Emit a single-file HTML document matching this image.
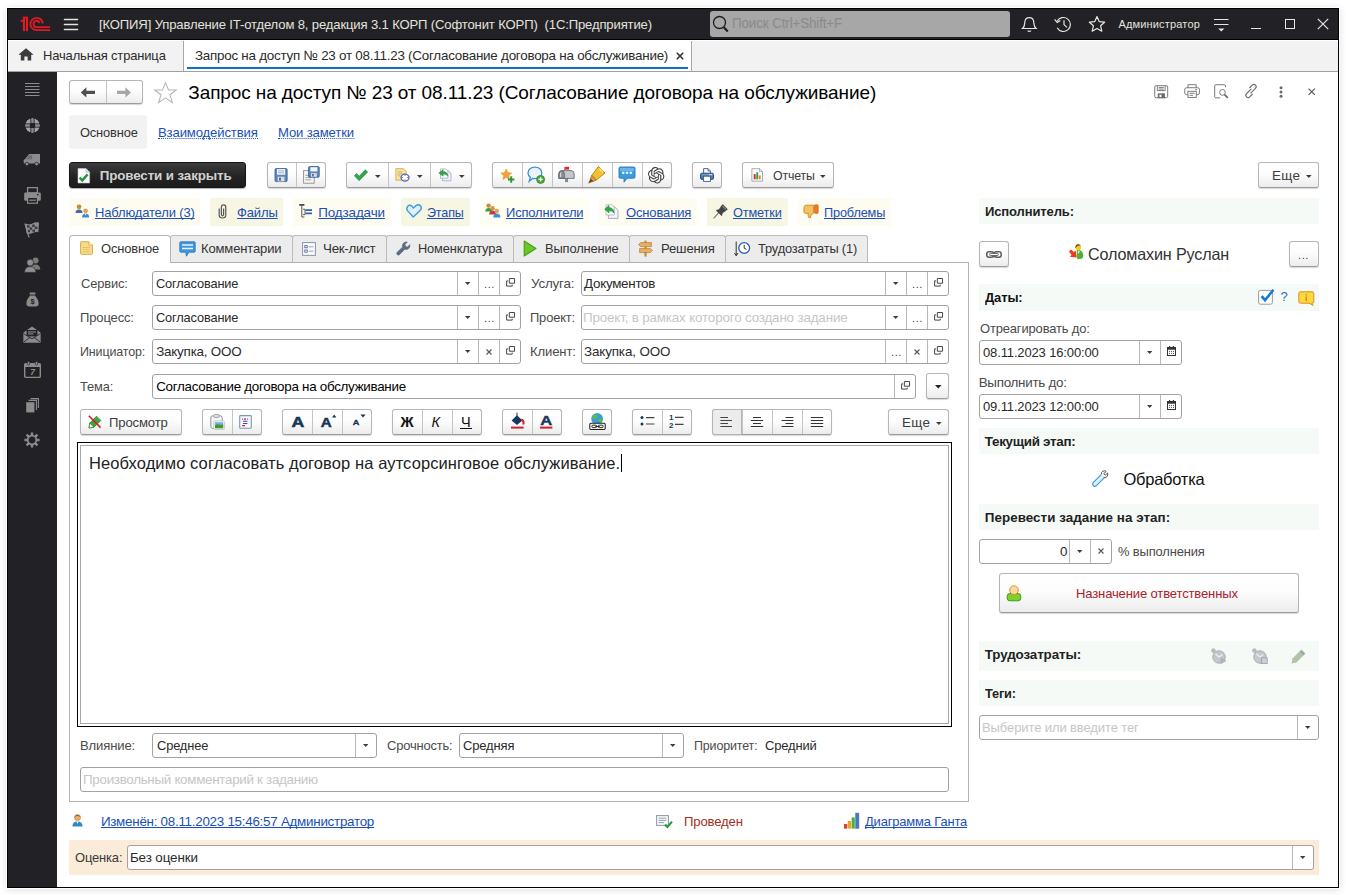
<!DOCTYPE html>
<html><head><meta charset="utf-8">
<style>
*{box-sizing:border-box;margin:0;padding:0}
html,body{width:1346px;height:895px;overflow:hidden;background:#fff}
body{font-family:"Liberation Sans",sans-serif;font-size:13px;color:#333;position:relative}
.a{position:absolute;white-space:pre}
#win{position:absolute;left:7px;top:8px;width:1332px;height:880px;border:1px solid #000;background:#fff;box-shadow:0 0 0 1px #fff,0 1px 7px 1px rgba(0,0,0,.13)}
#tb{position:absolute;left:8px;top:9px;width:1330px;height:31px;background:#222226}
#tabs{position:absolute;left:8px;top:40px;width:1330px;height:32px;background:#f2f2f2;border-bottom:1px solid #a0a0a0}
#side{position:absolute;left:8px;top:72px;width:49px;height:815px;background:#222226}
.btn{position:absolute;border:1px solid #b6b6b6;border-bottom-color:#9c9c9c;border-radius:3px;background:linear-gradient(#ffffff 0%,#fdfdfd 45%,#ececec 100%);box-shadow:0 1px 1px rgba(0,0,0,.16);color:#444}
.dv{position:absolute;top:0;bottom:0;width:1px;background:#c4c4c4}
.inp{position:absolute;border:1px solid #a2a2a2;border-radius:3px;background:#fff;height:25px;color:#222}
.inp .t{position:absolute;left:4px;top:4px;white-space:pre;font-size:13px}
.inp .ph{color:#c3c3c3}
.inp .dv{background:#b8b8b8}
.lbl{position:absolute;white-space:pre;color:#4a4a4a;font-size:13px}
.lnk{color:#1a4fb5;text-decoration:underline;text-decoration-skip-ink:none}
.hdr{position:absolute;left:979px;width:340px;background:#f5faf7;font-weight:bold;color:#222;font-size:13.4px;padding-left:5px;white-space:pre}
.li{position:absolute;top:198px;height:28px}
.li span{position:absolute;top:6px;white-space:pre;font-size:13px}
.tab{position:absolute;top:235px;height:28px;border:1px solid #bcbcbc;border-left:none;background:#ececec;border-bottom:1px solid #b0b0b0;border-radius:3px 3px 0 0}
.tab span{position:absolute;top:5px;white-space:pre;font-size:13.3px;color:#333}
.lk{top:205px;font-size:13.4px;line-height:15px}
.tt{top:241px;font-size:13.4px;line-height:15px;color:#333}
.arr{position:absolute;width:0;height:0;border-left:3px solid transparent;border-right:3px solid transparent;border-top:3px solid #444}
svg{position:absolute;overflow:visible}
</style></head><body>
<div id="win"></div>
<div id="tb"></div>
<div id="tabs"></div>
<div id="side"></div>
<div class="a" style="left:8px;top:39px;width:1330px;height:1px;background:#000"></div><div class="a" style="left:8px;top:40px;width:1330px;height:1px;background:#fff"></div>
<!--TITLEBAR-->
<svg style="left:20px;top:16px" width="31" height="16" viewBox="0 0 31 16"><g fill="#df1a22"><rect x="2.9" y="0.8" width="2.1" height="14.3"></rect><rect x="5.9" y="0.8" width="2.1" height="14.3"></rect><rect x="0.8" y="3.8" width="2.4" height="2.1"></rect><rect x="2.9" y="0.8" width="5.1" height="1.6"></rect></g><g fill="none" stroke="#df1a22" stroke-width="1.8"><path d="M22.8 7.4A6.2 6.2 0 1 0 16.6 14.2H30.1"></path><path d="M19.7 7A3.2 3.2 0 1 0 16.6 11.2H30.1"></path></g></svg>
<svg style="left:63px;top:18px" width="16" height="13" viewBox="0 0 16 13"><g stroke="#e2e2e2" stroke-width="1.4" stroke-linecap="round"><path d="M1.4 1.5H14.6M1.4 6.5H14.6M1.4 11.5H14.6"></path></g></svg>
<div class="a" style="top: 17px; font-size: 13.4px; line-height: 15px; color: rgb(226, 226, 222); transform: scaleX(0.9769); transform-origin: 0px 0px; letter-spacing: -0.15px; left: 99px;">[КОПИЯ] Управление IT-отделом 8, редакция 3.1 КОРП (Софтонит КОРП)  (1С:Предприятие)</div>
<div class="a" style="left:710px;top:11px;width:300px;height:26px;background:#a7a7a7;border-radius:3px"></div>
<svg style="left:712px;top:14px" width="18" height="19" viewBox="0 0 18 19"><circle cx="7.5" cy="8.5" r="6" fill="none" stroke="#1e1e1e" stroke-width="1.3"></circle><path d="M11.8 13.2L15.8 17.4" stroke="#1e1e1e" stroke-width="2.2"></path></svg>
<div class="a" style="top: 15px; font-size: 14px; line-height: 17px; color: rgb(138, 138, 138); transform: scaleX(0.9605); transform-origin: 0px 0px; letter-spacing: -0.15px; left: 731.54px;">Поиск Ctrl+Shift+F</div>
<svg style="left:1021px;top:16px" width="17" height="17" viewBox="0 0 17 17"><g fill="none" stroke="#e6e6e6" stroke-width="1.2"><path d="M1.5 12.5 C3.8 10.5 3.6 8.5 3.8 6.2 C4 3.4 6 1.6 8.3 1.6 C10.6 1.6 12.6 3.4 12.8 6.2 C13 8.5 12.8 10.5 15.1 12.5 Z"></path><path d="M6.6 14.6 Q8.3 16.2 10 14.6"></path></g></svg>
<svg style="left:1054px;top:16px" width="19" height="17" viewBox="0 0 19 17"><g fill="none" stroke="#e6e6e6" stroke-width="1.2"><path d="M3.2 5.2 A7 7 0 1 1 3.2 11.8"></path><path d="M10 4.2V8.6L13 11.4"></path><path d="M0.6 3.4L3.2 6.4L6.4 4.4"></path></g></svg>
<svg style="left:1088px;top:15px" width="18" height="18" viewBox="0 0 18 18"><path d="M9 1.6L11.2 6.6L16.6 7.2L12.6 10.8L13.8 16.2L9 13.4L4.2 16.2L5.4 10.8L1.4 7.2L6.8 6.6Z" fill="none" stroke="#e6e6e6" stroke-width="1.2" stroke-linejoin="round"></path></svg>
<div class="a" style="top: 17px; font-size: 11px; line-height: 15px; color: rgb(226, 226, 222); letter-spacing: 0.171px; left: 1118.4px;">Администратор</div>
<svg style="left:1214px;top:18px" width="15" height="15" viewBox="0 0 15 15"><g stroke="#e6e6e6" stroke-width="1.1"><path d="M0 1.5H14.5M0 6.5H14.5"></path></g><path d="M4.2 10.4H10.4L7.3 13.6Z" fill="#e6e6e6"></path></svg>
<div class="a" style="left:1251px;top:28px;width:10px;height:1.3px;background:#e6e6e6"></div>
<div class="a" style="left:1285px;top:19px;width:10px;height:10px;border:1.2px solid #e6e6e6"></div>
<svg style="left:1317px;top:18px" width="12" height="12" viewBox="0 0 12 12"><path d="M0.8 0.8L11.2 11.2M11.2 0.8L0.8 11.2" stroke="#e6e6e6" stroke-width="1.2"></path></svg>
<!--TABBAR-->
<svg style="left:18px;top:48px" width="16" height="13" viewBox="0 0 16 13"><path d="M8 0.3L15.6 6.8H13.2V12.6H9.6V8.4H6.4V12.6H2.8V6.8H0.4Z" fill="#3c3c3c"></path></svg>
<div class="a" style="top: 48px; font-size: 13.4px; line-height: 15px; color: rgb(43, 43, 43); transform: scaleX(0.9671); transform-origin: 0px 0px; letter-spacing: -0.15px; left: 43.23px;">Начальная страница</div>
<div class="a" style="left:183px;top:41px;width:509px;height:30px;background:#fff;border-left:1px solid #a6a6a6;border-right:1px solid #a6a6a6"></div>
<div class="a" style="top: 48px; font-size: 13.4px; line-height: 15px; color: rgb(43, 43, 43); letter-spacing: -0.232px; left: 194.9px;">Запрос на доступ № 23 от 08.11.23 (Согласование договора на обслуживание)</div>
<div class="a" style="left:187px;top:67px;width:501px;height:2px;background:#0f70c8"></div>
<svg style="left:676px;top:52px" width="8" height="8" viewBox="0 0 8 8"><path d="M0.8 0.8L7.2 7.2M7.2 0.8L0.8 7.2" stroke="#333" stroke-width="1.6"></path></svg>
<!--SIDEBAR-->
<svg style="left:25px;top:82px" width="15" height="15" viewBox="0 0 15 15"><path d="M0 1.5H14.5M0 4.5H14.5M0 7.5H14.5M0 10.5H14.5M0 13.5H14.5" stroke="#8c8c8c" stroke-width="1"></path></svg>
<svg style="left:25px;top:118px" width="15" height="15" viewBox="0 0 15 15"><circle cx="7.5" cy="7.5" r="7.3" fill="#a4a4a4"></circle><rect x="6" y="0" width="3" height="15" fill="#8a8a8a"></rect><rect x="0" y="6" width="15" height="3" fill="#8a8a8a"></rect><path d="M5.8 0V15M9.2 0V15M0 5.8H15M0 9.2H15" stroke="#2a2a2e" stroke-width=".9"></path><circle cx="7.5" cy="7.5" r="7.9" fill="none" stroke="#222226" stroke-width="1"></circle><rect x="4.9" y="4.9" width="5.2" height="5.2" rx="1.6" fill="#222226"></rect></svg>
<svg style="left:23px;top:153px" width="18" height="14" viewBox="0 0 18 14"><path d="M6.2 1H17V10.6H0.8V7.2Z" fill="#8c8c8c"></path><path d="M6.6 2.2H9.2V6.2H2.6Z" fill="#6e6e6e"></path><circle cx="4" cy="11" r="1.8" fill="#8c8c8c" stroke="#222226" stroke-width=".7"></circle><circle cx="13.6" cy="11" r="1.8" fill="#8c8c8c" stroke="#222226" stroke-width=".7"></circle></svg>
<svg style="left:24px;top:187px" width="17" height="17" viewBox="0 0 17 17"><path d="M3.6 0.6H13.4V6H3.6Z" fill="none" stroke="#8c8c8c" stroke-width="1.3"></path><rect x="0.2" y="5.4" width="16.6" height="8.4" rx="1.3" fill="#8c8c8c"></rect><rect x="3.6" y="10.4" width="9.8" height="5.8" fill="#222226" stroke="#8c8c8c" stroke-width="1.2"></rect><rect x="5.2" y="12.6" width="6.6" height="1.2" fill="#8c8c8c"></rect><rect x="13" y="7" width="1.6" height="1.4" fill="#222226"></rect></svg>
<svg style="left:24px;top:222px" width="16" height="16" viewBox="0 0 16 16"><path d="M1 1.6Q5 3.2 8.4 1.4T15 0.6L14.4 10.2Q11 9.8 8 11.2T2.6 11.6Z" fill="#8c8c8c"></path><g fill="#222226" opacity=".75"><rect x="3" y="3.2" width="2.6" height="2.4"></rect><rect x="8.2" y="2.6" width="2.6" height="2.4"></rect><rect x="5.6" y="5.4" width="2.6" height="2.4"></rect><rect x="10.8" y="4.6" width="2.6" height="2.4"></rect><rect x="3.6" y="8" width="2.4" height="2.2"></rect><rect x="8.4" y="7.6" width="2.6" height="2.2"></rect></g><path d="M1 1.6L5 15.4" stroke="#8c8c8c" stroke-width="1.3"></path></svg>
<svg style="left:24px;top:257px" width="17" height="16" viewBox="0 0 17 16"><circle cx="11.6" cy="3.6" r="3" fill="#7a7a7a"></circle><path d="M7 12.4Q7.4 7.4 11.6 7.4T16.4 12.4Z" fill="#7a7a7a"></path><circle cx="6.2" cy="5.6" r="3.4" fill="#8e8e8e" stroke="#222226" stroke-width=".6"></circle><path d="M0.4 15.4Q0.8 9.6 6.2 9.6T12 15.4Z" fill="#8e8e8e" stroke="#222226" stroke-width=".6"></path></svg>
<svg style="left:26px;top:292px" width="13" height="15" viewBox="0 0 13 15"><rect x="3.6" y="0.4" width="5.8" height="2.2" rx=".6" fill="#8c8c8c"></rect><path d="M4 3.4H9Q12.6 7.4 12.6 11.4Q12.6 14.4 9.6 14.4H3.4Q0.4 14.4 0.4 11.4Q0.4 7.4 4 3.4Z" fill="#8c8c8c"></path><text x="6.5" y="12.2" font-size="7.5" font-weight="bold" text-anchor="middle" fill="#222226" font-family="Liberation Sans">$</text></svg>
<svg style="left:23px;top:326px" width="18" height="17" viewBox="0 0 18 17"><path d="M0.6 6.6L9 0.6L17.4 6.6V16.4H0.6Z" fill="#8c8c8c"></path><rect x="3.6" y="4" width="10.8" height="6.4" fill="#222226"></rect><rect x="5" y="5.4" width="8" height="1.1" fill="#8c8c8c"></rect><rect x="5" y="7.4" width="5.4" height="1.1" fill="#8c8c8c"></rect><path d="M0.6 7.4L9 12.6L17.4 7.4V16.4H0.6Z" fill="#8c8c8c"></path><path d="M1 15.8L7 11.4M17 15.8L11 11.4" stroke="#222226" stroke-width=".9"></path><path d="M1.2 8L9 12.8L16.8 8" stroke="#222226" stroke-width=".9" fill="none"></path></svg>
<svg style="left:24px;top:361px" width="17" height="17" viewBox="0 0 17 17"><rect x="0.7" y="2.6" width="15.6" height="13.8" rx="1.2" fill="none" stroke="#8c8c8c" stroke-width="1.4"></rect><rect x="0.7" y="2.6" width="15.6" height="3.4" fill="#8c8c8c"></rect><rect x="3.4" y="0.4" width="2.2" height="3.6" rx=".8" fill="#8c8c8c" stroke="#222226" stroke-width=".6"></rect><rect x="11.4" y="0.4" width="2.2" height="3.6" rx=".8" fill="#8c8c8c" stroke="#222226" stroke-width=".6"></rect><text x="8.7" y="14.4" font-size="8.6" font-weight="bold" font-style="italic" text-anchor="middle" fill="#8c8c8c" font-family="Liberation Sans">7</text></svg>
<svg style="left:26px;top:398px" width="13" height="15" viewBox="0 0 13 15"><path d="M4.6 0.6H12.4V10" fill="none" stroke="#8c8c8c" stroke-width="1.1"></path><path d="M2.6 2.4H10.4V12" fill="none" stroke="#8c8c8c" stroke-width="1.1"></path><rect x="0.2" y="4.2" width="8.2" height="10.2" fill="#8c8c8c"></rect></svg>
<svg style="left:24px;top:432px" width="16" height="16" viewBox="0 0 16 16"><g stroke="#8c8c8c" stroke-width="2.4"><path d="M8 0.4V15.6M0.4 8H15.6M2.6 2.6L13.4 13.4M13.4 2.6L2.6 13.4"></path></g><circle cx="8" cy="8" r="4.3" fill="#222226" stroke="#8c8c8c" stroke-width="1.7"></circle></svg>
<!--HEADER-->
<div class="btn" style="left:69px;top:80px;width:74px;height:24px"><div class="dv" style="left:36px"></div></div>
<svg style="left:80px;top:87px" width="16" height="11" viewBox="0 0 16 11"><path d="M0.8 5.4L6.4 0.2V3.8H15V7H6.4V10.6Z" fill="#505050"></path></svg>
<svg style="left:116px;top:87px" width="16" height="11" viewBox="0 0 16 11"><path d="M15 5.4L9.4 0.2V3.8H1V7H9.4V10.6Z" fill="#a6a6a6"></path></svg>
<svg style="left:153px;top:81px" width="25" height="24" viewBox="0 0 25 24"><path d="M12.5 1.6L15.5 9H23.2L17 13.8L19.4 21.6L12.5 16.8L5.6 21.6L8 13.8L1.8 9H9.5Z" fill="#fff" stroke="#b4b8bc" stroke-width="1.1" stroke-linejoin="miter"></path></svg>
<div class="a" style="top: 82px; font-size: 19px; line-height: 22px; color: rgb(0, 0, 0); letter-spacing: -0.104px; left: 188.3px;">Запрос на доступ № 23 от 08.11.23 (Согласование договора на обслуживание)</div>
<svg style="left:1154.2px;top:85px" width="14.6" height="13.6" viewBox="0 0 16 16" preserveAspectRatio="none"><g fill="none" stroke="#6a6a6a" stroke-width="1"><rect x="0.8" y="0.8" width="14.2" height="14.2" rx="1.6"></rect><path d="M3.6 1V6.6H12.2V1M5.2 3H10.6M5.2 4.8H10.6"></path><rect x="4.6" y="10.4" width="6.8" height="4.6" fill="#6a6a6a"></rect></g><rect x="6" y="11.4" width="2.2" height="2.8" fill="#fff"></rect></svg>
<svg style="left:1184px;top:84.2px" width="16.2" height="14.4" viewBox="0 0 18 17" preserveAspectRatio="none"><g fill="none" stroke="#6a6a6a" stroke-width="1"><path d="M4.4 4.4V0.8H13.6V4.4"></path><rect x="0.8" y="4.4" width="16.4" height="8.2" rx="2"></rect><rect x="4.4" y="8.6" width="9.2" height="7.4" fill="#fff"></rect><path d="M6.2 11H11.8M6.2 13.4H10M12.4 6.6H14.4"></path></g></svg>
<svg style="left:1214.2px;top:84.2px" width="15" height="14.6" viewBox="0 0 17 16" preserveAspectRatio="none"><g fill="none" stroke="#6a6a6a" stroke-width="1"><path d="M13 3.6V2Q13 0.8 11.8 0.8H2Q0.8 0.8 0.8 2V14Q0.8 15.2 2 15.2H7"></path><circle cx="9.6" cy="9.2" r="3.2"></circle><path d="M12 11.6L15.6 15.2" stroke-width="2"></path></g></svg>
<svg style="left:1243.4px;top:83.4px" width="16" height="16" viewBox="0 0 17 17"><g transform="rotate(-45 8.5 8.5)" fill="none" stroke="#6a6a6a" stroke-width="1.2" stroke-linecap="round"><path d="M10 7.1H3.2A2.4 2.4 0 0 0 3.2 11.9H7"></path><path d="M7 9.9H13.8A2.4 2.4 0 0 0 13.8 5.1H10"></path></g></svg>
<svg style="left:1279px;top:86px" width="4" height="12" viewBox="0 0 4 12"><circle cx="2" cy="1.8" r="1.5" fill="#6a6a6a"></circle><circle cx="2" cy="6" r="1.5" fill="#6a6a6a"></circle><circle cx="2" cy="10.2" r="1.5" fill="#6a6a6a"></circle></svg>
<svg style="left:1308px;top:88px" width="7.4" height="7.4" viewBox="0 0 8 8"><path d="M0.6 0.6L7.4 7.4M7.4 0.6L0.6 7.4" stroke="#5a5a5a" stroke-width="1.3"></path></svg>
<div class="a" style="left:69px;top:115px;width:78px;height:34px;background:#f2f2f2;border-radius:3px"></div>
<div class="a" style="top: 125px; font-size: 13.4px; line-height: 15px; color: rgb(51, 51, 51); transform: scaleX(0.9589); transform-origin: 0px 0px; letter-spacing: -0.15px; left: 79.9px;">Основное</div>
<div class="a" style="top: 125px; font-size: 13.4px; color: rgb(26, 79, 181); border-bottom: 1px dotted rgb(26, 79, 181); line-height: 15px; height: 14px; transform: scaleX(0.9804); transform-origin: 0px 0px; letter-spacing: -0.15px; left: 157.72px;">Взаимодействия</div>
<div class="a" style="top: 125px; font-size: 13.4px; color: rgb(26, 79, 181); border-bottom: 1px dotted rgb(26, 79, 181); line-height: 15px; height: 14px; transform: scaleX(0.9785); transform-origin: 0px 0px; letter-spacing: -0.15px; left: 277.72px;">Мои заметки</div>
<!--CMDBAR-->
<div class="a" style="left:69px;top:162px;width:177px;height:26px;border-radius:3px;background:linear-gradient(#3c3c3c,#242424 55%,#1c1c1c);border:1px solid #161616;box-shadow:0 1px 1px rgba(0,0,0,.3)"></div>
<svg style="left:77px;top:168px" width="14" height="16" viewBox="0 0 14 16"><path d="M1 0.6H9L12.6 4.2V15H1Z" fill="#fff" stroke="#c8c8c8" stroke-width=".6"></path><path d="M9 0.6V4.2H12.6" fill="#dfe6ee" stroke="#9ab" stroke-width=".6"></path><path d="M2.6 9.6L5.4 12.4L10.6 6.4" fill="none" stroke="#1f9a3a" stroke-width="2.4"></path></svg>
<div class="a" style="top: 168px; font-size: 13.4px; line-height: 15px; font-weight: bold; color: rgb(210, 210, 210); letter-spacing: -0.131px; left: 99.7px;">Провести и закрыть</div>
<div class="btn" style="left:267px;top:162px;width:59px;height:26px"><div class="dv" style="left:28px"></div></div>
<svg style="left:274px;top:167.5px" width="14.5" height="14.5" viewBox="0 0 15 16"><rect x="0.6" y="0.6" width="13.4" height="14.4" rx="1.2" fill="#5f86b8" stroke="#3c5f90" stroke-width=".9"></rect><rect x="2.8" y="1.2" width="9" height="6.2" fill="#f2f6fb"></rect><path d="M4 3.2H10.6M4 5.2H10.6" stroke="#8fa6c4" stroke-width=".9"></path><rect x="3.6" y="9.6" width="7.4" height="5.2" fill="#d5dde8"></rect><rect x="5" y="10.6" width="2.2" height="3.4" fill="#5a6f8c"></rect></svg>
<svg style="left:303px;top:166px" width="17" height="18" viewBox="0 0 17 18"><rect x="0.6" y="4.6" width="10.6" height="12.6" fill="#f4f4f4" stroke="#8e8e8e" stroke-width=".9"></rect><path d="M2.4 9.4H8M2.4 11.6H8M2.4 13.8H8" stroke="#9a9a9a" stroke-width=".9"></path><rect x="5.6" y="0.6" width="10.6" height="10.6" rx="1" fill="#5f86b8" stroke="#3c5f90" stroke-width=".9"></rect><rect x="7.4" y="1.2" width="7" height="4.2" fill="#f2f6fb"></rect><rect x="8" y="7.2" width="5.8" height="3.6" fill="#d5dde8"></rect><rect x="9" y="8" width="1.8" height="2.4" fill="#5a6f8c"></rect></svg>
<div class="btn" style="left:346px;top:162px;width:126px;height:26px"><div class="dv" style="left:41px"></div><div class="dv" style="left:83px"></div></div>
<svg style="left:353px;top:168.5px" width="16" height="12.5" viewBox="0 0 18 15"><path d="M1 8L3.8 5.4L6.8 8.6L14.2 1L17 3.6L6.8 14Z" fill="#2fa84a" stroke="#1d7e33" stroke-width=".7"></path></svg>
<svg style="left:375.2px;top:175px" width="5.6" height="3" viewBox="0 0 5.6 3"><path d="M0 0H5.6L2.8 3Z" fill="#3c3c3c"></path></svg>
<svg style="left:395px;top:168px" width="15.5" height="14.5" viewBox="0 0 18 19" preserveAspectRatio="none"><path d="M1 0.8H9.6L13 4.2V16H1Z" fill="#f7e3a4" stroke="#c9a040" stroke-width=".9"></path><path d="M3 5H8M3 7.6H9M3 10.2H6" stroke="#c9a040" stroke-width=".9"></path><circle cx="11.6" cy="12.6" r="4.6" fill="#fff" stroke="#3b6fd0" stroke-width="1.6"></circle><path d="M11.6 9.2V10.4M11.6 14.8V16M8.2 12.6H9.4M13.8 12.6H15" stroke="#d33" stroke-width="1.1"></path></svg>
<svg style="left:417.2px;top:175px" width="5.6" height="3" viewBox="0 0 5.6 3"><path d="M0 0H5.6L2.8 3Z" fill="#3c3c3c"></path></svg>
<svg style="left:437.5px;top:168px" width="14" height="13.5" viewBox="0 0 17 18" preserveAspectRatio="none"><path d="M5.4 3.4H12.4L15.8 6.8V17H5.4Z" fill="#eef3fa" stroke="#8ea0b8" stroke-width=".9"></path><path d="M3 1.2H9.6L12 3.6V13.6H3Z" fill="#fff" stroke="#98a4b4" stroke-width=".9"></path><path d="M1 6.6L6.2 2.2V4.8Q11.2 4.8 12 10.6Q10 7.8 6.2 8.2V11Z" fill="#2fa84a" stroke="#1b7a30" stroke-width=".6"></path></svg>
<svg style="left:459.2px;top:175px" width="5.6" height="3" viewBox="0 0 5.6 3"><path d="M0 0H5.6L2.8 3Z" fill="#3c3c3c"></path></svg>
<div class="btn" style="left:492px;top:162px;width:180px;height:26px"><div class="dv" style="left:29px"></div><div class="dv" style="left:59px"></div><div class="dv" style="left:89px"></div><div class="dv" style="left:119px"></div><div class="dv" style="left:149px"></div></div>
<svg style="left:500px;top:167.5px" width="16" height="16" viewBox="0 0 18 18"><path d="M7 1L8.8 5.2L13.2 5.6L9.8 8.6L10.8 13L7 10.6L3.2 13L4.2 8.6L0.8 5.6L5.2 5.2Z" fill="#f5a033" stroke="#e08a1c" stroke-width=".5"></path><path d="M12.6 9.4V16.6M9 13H16.2" stroke="#2a9a3c" stroke-width="2.2"></path></svg>
<svg style="left:527px;top:166px" width="19" height="19" viewBox="0 0 19 19"><path d="M8 1.2C12 1.2 14.8 3.6 14.8 7C14.8 10.4 12 12.6 8 12.6C7.2 12.6 6.4 12.5 5.8 12.3L2.2 15.4L3.4 11.4C1.8 10.4 1 8.8 1 7C1 3.6 4 1.2 8 1.2Z" fill="#eaf4fd" stroke="#3f8fd6" stroke-width="1.3"></path><circle cx="13.6" cy="13.4" r="4" fill="#45a63a" stroke="#2d7a26" stroke-width=".7"></circle><path d="M13.6 11.2V15.6M11.4 13.4H15.8" stroke="#fff" stroke-width="1.4"></path></svg>
<svg style="left:558px;top:166px" width="17" height="17" viewBox="0 0 17 17"><path d="M7 1V9" stroke="#c8202a" stroke-width="1.2"></path><path d="M7.4 0.8H11V3.6H7.4Z" fill="#e0202a"></path><path d="M0.8 8Q0.8 4.6 4 4.6H13Q16.2 4.6 16.2 8V12.4H0.8Z" fill="#c4c8cc" stroke="#6e747c" stroke-width=".9"></path><path d="M0.8 12.4V8Q0.8 4.8 3.6 4.8Q6.4 4.8 6.4 8V12.4Z" fill="#8a9098" stroke="#5e636a" stroke-width=".8"></path><path d="M2.6 6.6V11" stroke="#dfe3e8" stroke-width="1"></path><rect x="7.4" y="12.6" width="2.4" height="3.2" fill="#8a8f96" stroke="#666" stroke-width=".5"></rect></svg>
<svg style="left:587px;top:165px" width="20" height="20" viewBox="0 0 20 20"><path d="M11.4 1.4L18 8L9.4 15L4.8 10.4Z" fill="#f2c12e" stroke="#c48a12" stroke-width="1"></path><path d="M12.4 3.6L16 7.2" stroke="#fbe38a" stroke-width="1.6"></path><path d="M4.8 10.4L9.4 15L6.4 16.4L3.4 13.4Z" fill="#d99c4a" stroke="#a86a1e" stroke-width=".8"></path><path d="M3.4 13.4L6.4 16.4L1.2 18.4Z" fill="#7a4a1a"></path></svg>
<svg style="left:618px;top:166px" width="18" height="18" viewBox="0 0 18 18"><path d="M2.2 1H15.8Q17 1 17 2.2V11Q17 12.2 15.8 12.2H9L6 16.2V12.2H2.2Q1 12.2 1 11V2.2Q1 1 2.2 1Z" fill="#3d9be0" stroke="#2b78b8" stroke-width=".9"></path><path d="M2 2H16V5H2Z" fill="#7cc0f0" opacity=".7"></path><circle cx="5.2" cy="6.8" r="1.4" fill="#dff0fc"></circle><circle cx="9" cy="6.8" r="1.4" fill="#dff0fc"></circle><circle cx="12.8" cy="6.8" r="1.4" fill="#dff0fc"></circle></svg>
<svg style="left:648px;top:166.5px" width="16.5" height="16.5" viewBox="0 0 24 24"><path fill="#3a3a3a" d="M22.2819 9.8211a5.9847 5.9847 0 0 0-.5157-4.9108 6.0462 6.0462 0 0 0-6.5098-2.9A6.0651 6.0651 0 0 0 4.9807 4.1818a5.9847 5.9847 0 0 0-3.9977 2.9 6.0462 6.0462 0 0 0 .7427 7.0966 5.98 5.98 0 0 0 .511 4.9107 6.051 6.051 0 0 0 6.5146 2.9001A5.9847 5.9847 0 0 0 13.2599 24a6.0557 6.0557 0 0 0 5.7718-4.2058 5.9894 5.9894 0 0 0 3.9977-2.9001 6.0557 6.0557 0 0 0-.7475-7.0729zm-9.022 12.6081a4.4755 4.4755 0 0 1-2.8764-1.0408l.1419-.0804 4.7783-2.7582a.7948.7948 0 0 0 .3927-.6813v-6.7369l2.02 1.1686a.071.071 0 0 1 .038.052v5.5826a4.504 4.504 0 0 1-4.4945 4.4944zm-9.6607-4.1254a4.4708 4.4708 0 0 1-.5346-3.0137l.142.0852 4.783 2.7582a.7712.7712 0 0 0 .7806 0l5.8428-3.3685v2.3324a.0804.0804 0 0 1-.0332.0615L9.74 19.9502a4.4992 4.4992 0 0 1-6.1408-1.6464zM2.3408 7.8956a4.485 4.485 0 0 1 2.3655-1.9728V11.6a.7664.7664 0 0 0 .3879.6765l5.8144 3.3543-2.0201 1.1685a.0757.0757 0 0 1-.071 0l-4.8303-2.7865A4.504 4.504 0 0 1 2.3408 7.872zm16.5963 3.8558L13.1038 8.364 15.1192 7.2a.0757.0757 0 0 1 .071 0l4.8303 2.7913a4.4944 4.4944 0 0 1-.6765 8.1042v-5.6772a.79.79 0 0 0-.407-.667zm2.0107-3.0231l-.142-.0852-4.7735-2.7818a.7759.7759 0 0 0-.7854 0L9.409 9.2297V6.8974a.0662.0662 0 0 1 .0284-.0615l4.8303-2.7866a4.4992 4.4992 0 0 1 6.6802 4.66zM8.3065 12.863l-2.02-1.1638a.0804.0804 0 0 1-.038-.0567V6.0742a4.4992 4.4992 0 0 1 7.3757-3.4537l-.142.0805L8.704 5.459a.7948.7948 0 0 0-.3927.6813zm1.0976-2.3654l2.602-1.4998 2.6069 1.4998v2.9994l-2.5974 1.4997-2.6067-1.4997Z"></path></svg>
<div class="btn" style="left:692px;top:162px;width:30px;height:26px"></div>
<svg style="left:700px;top:168px" width="14" height="14" viewBox="0 0 14 14"><path d="M3.6 5.2V0.6H8L10.4 3V5.2" fill="#fff" stroke="#3c5a8c" stroke-width=".9"></path><path d="M8 0.6V3H10.4" fill="#9ab0cc" stroke="#3c5a8c" stroke-width=".7"></path><rect x="0.5" y="5.2" width="13" height="6.2" rx="1.4" fill="#4e78b0" stroke="#1e4878" stroke-width=".9"></rect><path d="M1.6 6.8H12.4" stroke="#8fb0d8" stroke-width=".8"></path><rect x="3.6" y="8.2" width="6.8" height="5.2" fill="#fff" stroke="#3c5a8c" stroke-width=".9"></rect><rect x="9.2" y="6.2" width="1.2" height="1" fill="#fff"></rect><rect x="11" y="6.2" width="1.2" height="1" fill="#fff"></rect></svg>
<div class="btn" style="left:742px;top:162px;width:92px;height:26px"></div>
<svg style="left:751px;top:168px" width="12.6" height="14" viewBox="0 0 14 16" preserveAspectRatio="none"><path d="M1 0.8H9.4L12.8 4.2V15H1Z" fill="#fff" stroke="#8c96a4" stroke-width=".9"></path><path d="M9.4 0.8V4.2H12.8" fill="none" stroke="#8c96a4" stroke-width=".8"></path><rect x="3" y="7" width="2.2" height="6" fill="#d83030"></rect><rect x="5.8" y="5" width="2.2" height="8" fill="#2fa84a"></rect><rect x="8.6" y="8.4" width="2.2" height="4.6" fill="#e08a1c"></rect></svg>
<div class="a" style="top: 168px; font-size: 13.4px; line-height: 15px; color: rgb(60, 60, 60); transform: scaleX(0.9218); transform-origin: 0px 0px; letter-spacing: -0.15px; left: 772.9px;">Отчеты</div>
<svg style="left:820.2px;top:175px" width="5.6" height="3" viewBox="0 0 5.6 3"><path d="M0 0H5.6L2.8 3Z" fill="#3c3c3c"></path></svg>
<div class="btn" style="left:1258px;top:162px;width:61px;height:26px"></div>
<div class="a" style="top: 168px; font-size: 13.4px; line-height: 15px; color: rgb(60, 60, 60); letter-spacing: 0.351px; left: 1271.9px;">Еще</div>
<svg style="left:1306.2px;top:175px" width="5.6" height="3" viewBox="0 0 5.6 3"><path d="M0 0H5.6L2.8 3Z" fill="#3c3c3c"></path></svg>
<!--LINKS-->
<div class="li" style="left:69px;width:131px;background:#fefcf1"></div>
<div class="li" style="left:210px;width:73px;background:#f6f6e2"></div>
<div class="li" style="left:293px;width:98px;background:#fefcf1"></div>
<div class="li" style="left:401px;width:69px;background:#f6f6e2"></div>
<div class="li" style="left:480px;width:109px;background:#fefef2"></div>
<div class="li" style="left:599px;width:98px;background:#fefcf1"></div>
<div class="li" style="left:707px;width:81px;background:#f6f6e2"></div>
<div class="li" style="left:798px;width:93px;background:#fefbf0"></div>
<div class="a lnk lk" style="transform: scaleX(0.9693); transform-origin: 0px 0px; letter-spacing: -0.15px; left: 94.63px;">Наблюдатели (3)</div>
<div class="a lnk lk" style="transform: scaleX(0.9729); transform-origin: 0px 0px; letter-spacing: -0.15px; left: 236.6px;">Файлы</div>
<div class="a lnk lk" style="letter-spacing: -0.115px; left: 318.3px;">Подзадачи</div>
<div class="a lnk lk" style="transform: scaleX(0.9353); transform-origin: 0px 0px; letter-spacing: -0.15px; left: 427.4px;">Этапы</div>
<div class="a lnk lk" style="transform: scaleX(0.9668); transform-origin: 0px 0px; letter-spacing: -0.15px; left: 505.53px;">Исполнители</div>
<div class="a lnk lk" style="transform: scaleX(0.9711); transform-origin: 0px 0px; letter-spacing: -0.15px; left: 625.6px;">Основания</div>
<div class="a lnk lk" style="transform: scaleX(0.9499); transform-origin: 0px 0px; letter-spacing: -0.15px; left: 733.3px;">Отметки</div>
<div class="a lnk lk" style="transform: scaleX(0.9492); transform-origin: 0px 0px; letter-spacing: -0.15px; left: 823.65px;">Проблемы</div>
<!-- link icons -->
<svg style="left:75px;top:204px" width="15" height="14" viewBox="0 0 15 14"><circle cx="4" cy="2.8" r="2.4" fill="#c98a3c"></circle><path d="M0.4 9Q0.6 5.4 4 5.4T7.6 9Z" fill="#3a6fb0"></path><circle cx="10.6" cy="6.8" r="2.4" fill="#e2a05a"></circle><path d="M7 13.4Q7.2 9.6 10.6 9.6T14.2 13.4Z" fill="#3b8fd0"></path><path d="M9.8 9.8L10.6 11.6L11.4 9.8Z" fill="#fff"></path></svg>
<svg style="left:218px;top:204px" width="9" height="15" viewBox="0 0 9 15"><path d="M1.2 4.4V11Q1.2 14 4.5 14T7.8 11V3.4Q7.8 0.8 5.6 0.8T3.4 3.4V10.6Q3.4 11.8 4.5 11.8T5.6 10.6V4.4" fill="none" stroke="#555" stroke-width="1.2"></path></svg>
<svg style="left:299px;top:204px" width="14" height="15" viewBox="0 0 14 15"><path d="M0.2 0.9H5.4" stroke="#333" stroke-width="1.6"></path><path d="M2.8 1.4V13H5.4" fill="none" stroke="#555" stroke-width="1"></path><path d="M4 5.2H6V10.6H4" fill="none" stroke="#555" stroke-width=".9"></path><path d="M6.4 6.2H13M6.4 9.4H13" stroke="#2f5fb0" stroke-width="1.7"></path></svg>
<svg style="left:406px;top:204px" width="16" height="14" viewBox="0 0 16 14"><path d="M7.2 13L1.4 6.6Q0 4 1.8 2.2T6 2.4L7.4 4L10 1.6Q12.6 -0.2 14.4 1.8T14.6 6Z" fill="#dff1fd" stroke="#3f9be0" stroke-width="1.4" stroke-linejoin="round"></path></svg>
<svg style="left:485px;top:203px" width="16" height="15" viewBox="0 0 16 15"><circle cx="3.6" cy="2.6" r="2.2" fill="#c98a3c"></circle><path d="M0.2 8.6Q0.4 5 3.6 5T7 8.6Z" fill="#3f9a3f"></path><circle cx="7.6" cy="5.2" r="2.2" fill="#d69648"></circle><path d="M4.2 11.4Q4.4 7.6 7.6 7.6T11 11.4Z" fill="#c83a3a"></path><circle cx="11.8" cy="8" r="2.2" fill="#e2a05a"></circle><path d="M8.2 14.6Q8.4 10.6 11.8 10.6T15.4 14.6Z" fill="#3b8fd0"></path></svg>
<svg style="left:604px;top:204px" width="15" height="15" viewBox="0 0 15 15"><path d="M4.4 2.6H10.4L14 6.2V14.4H4.4Z" fill="#f2f5f9" stroke="#9aa6b6" stroke-width=".9"></path><path d="M2 0.8H8L10.2 3V11H2Z" fill="#fff" stroke="#a8b0bc" stroke-width=".8"></path><path d="M0.6 5.2L5 1.4V3.6Q9.6 3.8 10.2 9Q8.4 6.6 5 6.8V9Z" fill="#2fa84a" stroke="#1b7a30" stroke-width=".5"></path></svg>
<svg style="left:713px;top:204px" width="15" height="15" viewBox="0 0 15 15"><path d="M0.6 14.4L6 8.4" stroke="#777" stroke-width="1.1"></path><path d="M3.2 6.4L8.6 11.8L9.6 8.8L13 6.6L14.4 5.2L9.8 0.6L8.4 2L6.2 5.4Z" fill="#444" stroke="#333" stroke-width=".5"></path><path d="M9.6 2.2L12.8 5.4" stroke="#888" stroke-width="1.2"></path></svg>
<svg style="left:803px;top:204px" width="16" height="15" viewBox="0 0 16 15"><rect x="11.4" y="0.8" width="3.8" height="8.6" rx="1" fill="#f07a1e" stroke="#c85e0e" stroke-width=".6"></rect><path d="M10.6 1.2H3Q1.4 1.2 1.2 2.8L0.8 7.6Q0.8 9.4 2.6 9.4H5.4Q4.8 11.4 5.4 13Q6 14.4 7.4 13.8Q7.6 11.4 9 10.2L10.6 9.2Z" fill="#f6c060" stroke="#c8882a" stroke-width=".9"></path></svg>
<!--PAGETABS-->
<div class="a" style="left:69px;top:262px;width:900px;height:540px;border:1px solid #b4b4b4;background:#fff"></div>
<div class="tab" style="left:170px;width:123px;border-left:1px solid #bcbcbc"></div>
<div class="tab" style="left:292px;width:95px;border-left:1px solid #bcbcbc"></div>
<div class="tab" style="left:386px;width:128px;border-left:1px solid #bcbcbc"></div>
<div class="tab" style="left:513px;width:117px;border-left:1px solid #bcbcbc"></div>
<div class="tab" style="left:629px;width:97px;border-left:1px solid #bcbcbc"></div>
<div class="tab" style="left:725px;width:143px;border-left:1px solid #bcbcbc;border-top-right-radius:3px"></div>
<div class="a" style="left:69px;top:235px;width:102px;height:28px;background:#fff;border:1px solid #b4b4b4;border-bottom:none;border-radius:4px 4px 0 0"></div>
<div class="a tt" style="transform: scaleX(0.9656); transform-origin: 0px 0px; letter-spacing: -0.15px; left: 101.4px;">Основное</div>
<div class="a tt" style="transform: scaleX(0.9722); transform-origin: 0px 0px; letter-spacing: -0.15px; left: 201.23px;">Комментарии</div>
<div class="a tt" style="letter-spacing: -0.297px; left: 323px;">Чек-лист</div>
<div class="a tt" style="transform: scaleX(0.9559); transform-origin: 0px 0px; letter-spacing: -0.15px; left: 417.64px;">Номенклатура</div>
<div class="a tt" style="transform: scaleX(0.9622); transform-origin: 0px 0px; letter-spacing: -0.15px; left: 544.54px;">Выполнение</div>
<div class="a tt" style="transform: scaleX(0.9749); transform-origin: 0px 0px; letter-spacing: -0.15px; left: 660.63px;">Решения</div>
<div class="a tt" style="transform: scaleX(0.957); transform-origin: 0px 0px; letter-spacing: -0.15px; left: 757.7px;">Трудозатраты (1)</div>
<!-- tab icons -->
<svg style="left:80px;top:241px" width="13.5" height="14" viewBox="0 0 14 16" preserveAspectRatio="none"><path d="M1.4 0.8H9L13 4.8V14Q13 15.2 11.8 15.2H1.4Q0.6 15.2 0.6 14.2V1.6Q0.6 0.8 1.4 0.8Z" fill="#f8dc8c" stroke="#d4a63c" stroke-width="1"></path><path d="M9 0.8V4.8H13" fill="#fdf0c0" stroke="#d4a63c" stroke-width=".8"></path><path d="M3 7.4H10.6M3 9.8H10.6M3 12.2H10.6" stroke="#e4bc58" stroke-width=".9"></path></svg>
<svg style="left:179px;top:241px" width="17" height="16" viewBox="0 0 17 16"><path d="M1.8 0.8H15.2Q16.2 0.8 16.2 1.8V10.2Q16.2 11.2 15.2 11.2H10L7.4 15.2L6.8 11.2H1.8Q0.8 11.2 0.8 10.2V1.8Q0.8 0.8 1.8 0.8Z" fill="#3f97e0" stroke="#2a74b8" stroke-width=".8"></path><path d="M3 4H14M3 7.4H14" stroke="#e8f4fd" stroke-width="1.5"></path></svg>
<svg style="left:302px;top:242px" width="14" height="14" viewBox="0 0 14 14"><rect x="0.6" y="0.6" width="12.8" height="12.8" fill="#fbfbfd" stroke="#8a93a8" stroke-width="1"></rect><rect x="2.8" y="3.6" width="2.4" height="2.2" fill="none" stroke="#4a5c8c" stroke-width=".8"></rect><rect x="2.8" y="8" width="2.4" height="2.2" fill="none" stroke="#4a5c8c" stroke-width=".8"></rect><path d="M6.8 4.8H11.4M6.8 9.2H11.4" stroke="#9aa2b4" stroke-width="1"></path></svg>
<svg style="left:396px;top:241px" width="15" height="15" viewBox="0 0 15 15"><path d="M13.8 3.6Q14.4 6 12.6 7.6T8.8 8.2L3.4 13.8Q2.2 14.6 1.2 13.6T1 11.4L6.6 6Q5.8 3.8 7.4 2.2T11.4 1L9 3.4L9.6 5.4L11.6 6Z" fill="#5e6e82" stroke="#46566a" stroke-width=".5"></path></svg>
<svg style="left:523px;top:240px" width="14" height="17" viewBox="0 0 14 17"><path d="M1.2 1L13 8.5L1.2 16Z" fill="#6cc62a" stroke="#48a010" stroke-width="1.1" stroke-linejoin="round"></path></svg>
<svg style="left:638px;top:240px" width="15" height="17" viewBox="0 0 15 17"><rect x="6.4" y="0.6" width="2.2" height="16" fill="#c98a3c"></rect><path d="M2.6 2.6H13.4V6.6H2.6L0.6 4.6Z" fill="#e8ae62" stroke="#b87a2a" stroke-width=".7"></path><path d="M1.6 8.6H12.4L14.4 10.6L12.4 12.6H1.6Z" fill="#e8ae62" stroke="#b87a2a" stroke-width=".7"></path></svg>
<svg style="left:734px;top:241px" width="17" height="16" viewBox="0 0 17 16"><path d="M2.2 0.6V14.4M0.4 12L2.2 14.8L4 12" fill="none" stroke="#333" stroke-width="1"></path><circle cx="10.2" cy="7" r="5.4" fill="#fff" stroke="#2e5fae" stroke-width="1.3"></circle><path d="M10.2 3.8V7.2L12.4 8.4" fill="none" stroke="#333" stroke-width="1"></path></svg>
<!--FORM-->
<div class="a" style="top: 276px; font-size: 13.4px; line-height: 15px; color: rgb(74, 74, 74); transform: scaleX(0.9613); transform-origin: 0px 0px; letter-spacing: -0.15px; left: 80.7px;">Сервис:</div>
<div class="inp" style="left:152px;top:271px;width:369px;height:25px"><div class="dv" style="left:304px"></div><div class="dv" style="left:325px"></div><div class="dv" style="left:346px"></div></div>
<div class="a" style="top: 276px; font-size: 13.4px; line-height: 15px; color: rgb(42, 42, 42); transform: scaleX(0.9546); transform-origin: 0px 0px; letter-spacing: -0.15px; left: 156.2px;">Согласование</div>
<svg style="left:465px;top:281.5px" width="5.4" height="2.9" viewBox="0 0 5.4 2.9"><path d="M0 0H5.4L2.7 2.9Z" fill="#3c3c3c"></path></svg>
<div class="a" style="left:484px;top:279px;font-size:11px;color:#444;letter-spacing:0.6px;line-height:10px">...</div>
<svg style="left:505.5px;top:277.7px" width="9.2" height="9" viewBox="0 0 10 10"><path d="M3.6 0.6H9.4V5.8H3.6Z" fill="none" stroke="#444" stroke-width="1.1"></path><path d="M2.2 3.2H0.6V9H6.8V7.4" fill="none" stroke="#444" stroke-width="1.1"></path></svg>
<div class="a" style="top: 276px; font-size: 13.4px; line-height: 15px; color: rgb(74, 74, 74); letter-spacing: -0.192px; left: 531px;">Услуга:</div>
<div class="inp" style="left:581px;top:271px;width:368px;height:25px"><div class="dv" style="left:303px"></div><div class="dv" style="left:324px"></div><div class="dv" style="left:345px"></div></div>
<div class="a" style="top: 276px; font-size: 13.4px; line-height: 15px; color: rgb(42, 42, 42); letter-spacing: -0.266px; left: 584px;">Документов</div>
<svg style="left:893px;top:281.5px" width="5.4" height="2.9" viewBox="0 0 5.4 2.9"><path d="M0 0H5.4L2.7 2.9Z" fill="#3c3c3c"></path></svg>
<div class="a" style="left:912px;top:279px;font-size:11px;color:#444;letter-spacing:0.6px;line-height:10px">...</div>
<svg style="left:933.5px;top:277.7px" width="9.2" height="9" viewBox="0 0 10 10"><path d="M3.6 0.6H9.4V5.8H3.6Z" fill="none" stroke="#444" stroke-width="1.1"></path><path d="M2.2 3.2H0.6V9H6.8V7.4" fill="none" stroke="#444" stroke-width="1.1"></path></svg>
<div class="a" style="top: 310px; font-size: 13.4px; line-height: 15px; color: rgb(74, 74, 74); transform: scaleX(0.9717); transform-origin: 0px 0px; letter-spacing: -0.15px; left: 79.73px;">Процесс:</div>
<div class="inp" style="left:152px;top:305px;width:369px;height:25px"><div class="dv" style="left:304px"></div><div class="dv" style="left:325px"></div><div class="dv" style="left:346px"></div></div>
<div class="a" style="top: 310px; font-size: 13.4px; line-height: 15px; color: rgb(42, 42, 42); transform: scaleX(0.9546); transform-origin: 0px 0px; letter-spacing: -0.15px; left: 156.2px;">Согласование</div>
<svg style="left:465px;top:315.5px" width="5.4" height="2.9" viewBox="0 0 5.4 2.9"><path d="M0 0H5.4L2.7 2.9Z" fill="#3c3c3c"></path></svg>
<div class="a" style="left:484px;top:313px;font-size:11px;color:#444;letter-spacing:0.6px;line-height:10px">...</div>
<svg style="left:505.5px;top:311.7px" width="9.2" height="9" viewBox="0 0 10 10"><path d="M3.6 0.6H9.4V5.8H3.6Z" fill="none" stroke="#444" stroke-width="1.1"></path><path d="M2.2 3.2H0.6V9H6.8V7.4" fill="none" stroke="#444" stroke-width="1.1"></path></svg>
<div class="a" style="top: 310px; font-size: 13.4px; line-height: 15px; color: rgb(74, 74, 74); transform: scaleX(0.9622); transform-origin: 0px 0px; letter-spacing: -0.15px; left: 530.04px;">Проект:</div>
<div class="inp" style="left:581px;top:305px;width:368px;height:25px"><div class="dv" style="left:303px"></div><div class="dv" style="left:324px"></div><div class="dv" style="left:345px"></div></div>
<div class="a" style="top: 310px; font-size: 13.4px; line-height: 15px; color: rgb(198, 198, 198); letter-spacing: -0.165px; left: 583px;">Проект, в рамках которого создано задание</div>
<svg style="left:893px;top:315.5px" width="5.4" height="2.9" viewBox="0 0 5.4 2.9"><path d="M0 0H5.4L2.7 2.9Z" fill="#3c3c3c"></path></svg>
<div class="a" style="left:912px;top:313px;font-size:11px;color:#444;letter-spacing:0.6px;line-height:10px">...</div>
<svg style="left:933.5px;top:311.7px" width="9.2" height="9" viewBox="0 0 10 10"><path d="M3.6 0.6H9.4V5.8H3.6Z" fill="none" stroke="#444" stroke-width="1.1"></path><path d="M2.2 3.2H0.6V9H6.8V7.4" fill="none" stroke="#444" stroke-width="1.1"></path></svg>
<div class="a" style="top: 344px; font-size: 13.4px; line-height: 15px; color: rgb(74, 74, 74); transform: scaleX(0.9308); transform-origin: 0px 0px; letter-spacing: -0.15px; left: 79.77px;">Инициатор:</div>
<div class="inp" style="left:152px;top:339px;width:369px;height:25px"><div class="dv" style="left:304px"></div><div class="dv" style="left:325px"></div><div class="dv" style="left:346px"></div></div>
<div class="a" style="top: 344px; font-size: 13.4px; line-height: 15px; color: rgb(42, 42, 42); letter-spacing: -0.206px; left: 156.2px;">Закупка, ООО</div>
<svg style="left:465px;top:349.5px" width="5.4" height="2.9" viewBox="0 0 5.4 2.9"><path d="M0 0H5.4L2.7 2.9Z" fill="#3c3c3c"></path></svg>
<svg style="left:485.5px;top:348.5px" width="6" height="6" viewBox="0 0 6 6"><path d="M0.5 0.5L5.5 5.5M5.5 0.5L0.5 5.5" stroke="#555" stroke-width="1.1"></path></svg>
<svg style="left:505.5px;top:345.7px" width="9.2" height="9" viewBox="0 0 10 10"><path d="M3.6 0.6H9.4V5.8H3.6Z" fill="none" stroke="#444" stroke-width="1.1"></path><path d="M2.2 3.2H0.6V9H6.8V7.4" fill="none" stroke="#444" stroke-width="1.1"></path></svg>
<div class="a" style="top: 344px; font-size: 13.4px; line-height: 15px; color: rgb(74, 74, 74); transform: scaleX(0.9786); transform-origin: 0px 0px; letter-spacing: -0.15px; left: 529.92px;">Клиент:</div>
<div class="inp" style="left:581px;top:339px;width:368px;height:25px"><div class="dv" style="left:303px"></div><div class="dv" style="left:324px"></div><div class="dv" style="left:345px"></div></div>
<div class="a" style="top: 344px; font-size: 13.4px; line-height: 15px; color: rgb(42, 42, 42); letter-spacing: -0.124px; left: 584px;">Закупка, ООО</div>
<div class="a" style="left:891px;top:347px;font-size:11px;color:#444;letter-spacing:0.6px;line-height:10px">...</div>
<svg style="left:913.5px;top:348.5px" width="6" height="6" viewBox="0 0 6 6"><path d="M0.5 0.5L5.5 5.5M5.5 0.5L0.5 5.5" stroke="#555" stroke-width="1.1"></path></svg>
<svg style="left:933.5px;top:345.7px" width="9.2" height="9" viewBox="0 0 10 10"><path d="M3.6 0.6H9.4V5.8H3.6Z" fill="none" stroke="#444" stroke-width="1.1"></path><path d="M2.2 3.2H0.6V9H6.8V7.4" fill="none" stroke="#444" stroke-width="1.1"></path></svg>
<div class="a" style="top: 379px; font-size: 13.4px; line-height: 15px; color: rgb(74, 74, 74); transform: scaleX(0.9579); transform-origin: 0px 0px; letter-spacing: -0.15px; left: 80px;">Тема:</div>
<div class="inp" style="left:152px;top:374px;width:764px;height:25px"><div class="dv" style="left:741px"></div></div>
<div class="a" style="top: 379px; font-size: 13.4px; line-height: 15px; color: rgb(0, 0, 0); letter-spacing: -0.282px; left: 156.2px;">Согласование договора на обслуживание</div>
<svg style="left:900.5px;top:380.7px" width="9.2" height="9" viewBox="0 0 10 10"><path d="M3.6 0.6H9.4V5.8H3.6Z" fill="none" stroke="#444" stroke-width="1.1"></path><path d="M2.2 3.2H0.6V9H6.8V7.4" fill="none" stroke="#444" stroke-width="1.1"></path></svg>
<div class="btn" style="left:926px;top:373px;width:23px;height:26px"></div>
<svg style="left:934.9px;top:385px" width="6.6" height="3.6" viewBox="0 0 8 4.4" preserveAspectRatio="none"><path d="M0 0H8L4 4.4Z" fill="#222"></path></svg>
<!--EDITOR-->
<div class="btn" style="left:80px;top:409px;width:102px;height:26px"></div>
<svg style="left:88px;top:415px" width="14" height="14" viewBox="0 0 14 14"><path d="M8.6 1.2L12.8 5.4L6 12.2L1 13L1.8 8Z" fill="#3aa83a" stroke="#1e7a1e" stroke-width=".8"></path><path d="M1.8 8L6 12.2L1 13Z" fill="#f4f4e8" stroke="#1e7a1e" stroke-width=".6"></path><path d="M9.6 2.2L11.8 4.4" stroke="#8fe08f" stroke-width="1"></path><path d="M0.8 0.8L12.6 12.6" stroke="#d8202a" stroke-width="1.6"></path></svg>
<div class="a" style="top: 415px; font-size: 13.4px; line-height: 15px; color: rgb(60, 60, 60); transform: scaleX(0.9786); transform-origin: 0px 0px; letter-spacing: -0.15px; left: 109.32px;">Просмотр</div>
<div class="btn" style="left:202px;top:409px;width:60px;height:26px"><div class="dv" style="left:29px"></div></div>
<svg style="left:210px;top:413.6px" width="15" height="16" viewBox="0 0 15 16"><rect x="0.8" y="1.8" width="11.4" height="12.6" rx="2" fill="#f6f6f6" stroke="#8e949c" stroke-width="1"></rect><rect x="3.6" y="0.6" width="5.8" height="2.8" rx="1.2" fill="#e0e2e6" stroke="#8e949c" stroke-width=".8"></rect><rect x="3.8" y="7" width="10.6" height="8.4" rx="1" fill="#fff" stroke="#b8bcc2" stroke-width=".8"></rect><rect x="5" y="8.2" width="8.2" height="6" fill="#6ab4f0"></rect><path d="M5 14.2V11.4Q7 9.6 9 10.6T13.2 10.2V14.2Z" fill="#4a9a1e"></path></svg>
<svg style="left:239.2px;top:415px" width="13" height="13.8" viewBox="0 0 13 14"><rect x="0.6" y="0.6" width="11.8" height="12.8" rx=".8" fill="#f4f8fd" stroke="#8296b0" stroke-width="1.1"></rect><path d="M5 4.2H7M4 6.4H8.4M4 8.6H8.4" stroke="#3048c8" stroke-width="1.1"></path><path d="M3 4.2H4M8.2 4.2H9.2M3 10.8H6" stroke="#e8202a" stroke-width="1.1"></path></svg>
<div class="btn" style="left:282px;top:409px;width:90px;height:26px"><div class="dv" style="left:29px"></div><div class="dv" style="left:59px"></div></div>
<svg style="left:290px;top:414px" width="16" height="14" viewBox="0 0 16 14"><text transform="translate(8 12.5) scale(1.27 1)" font-family="Liberation Sans" font-size="14" font-weight="bold" text-anchor="middle" fill="#16365a" stroke="#16365a" stroke-width=".5">A</text></svg>
<svg style="left:319px;top:414px" width="16" height="14" viewBox="0 0 16 14"><text transform="translate(7.2 12.5) scale(1.2 1)" font-family="Liberation Sans" font-size="12.6" font-weight="bold" text-anchor="middle" fill="#16365a" stroke="#16365a" stroke-width=".5">A</text><path d="M13 3.4L15.2 0.4L17.4 3.4Z" fill="#16365a"></path></svg>
<svg style="left:350px;top:414px" width="18" height="14" viewBox="0 0 18 14"><text transform="translate(6 11.2) scale(1.2 1)" font-family="Liberation Sans" font-size="7.6" font-weight="bold" text-anchor="middle" fill="#16365a" stroke="#16365a" stroke-width=".3">A</text><path d="M10.4 0.4H15.6L13 3.4Z" fill="#16365a"></path></svg>
<div class="btn" style="left:392px;top:409px;width:90px;height:26px"><div class="dv" style="left:29px"></div><div class="dv" style="left:59px"></div></div>
<div class="a" style="left:400.5px;top:413px;font-size:14.5px;font-weight:bold;color:#111;line-height:18px">Ж</div>
<div class="a" style="left:431.5px;top:413px;font-size:14.5px;font-style:italic;color:#111;line-height:18px">К</div>
<div class="a" style="left:461.5px;top:413px;font-size:14.5px;color:#111;line-height:18px;border-bottom:1px solid #111;height:16px;padding:0 1px;margin-left:-1.5px">Ч</div>
<div class="btn" style="left:502px;top:409px;width:60px;height:26px"><div class="dv" style="left:29px"></div></div>
<svg style="left:509.6px;top:412px" width="16" height="18" viewBox="0 0 16 18"><path d="M7 0.6V5" stroke="#1c3a66" stroke-width="1"></path><path d="M7 3.2L12.4 8.6L7 13L1.6 8.6Z" fill="#16365a"></path><path d="M11.6 6.8Q15.2 7.2 14.4 12.6H12.2Q13.4 9.6 10.8 8.2Z" fill="#d0202a"></path><rect x="1" y="14.6" width="12.6" height="2" fill="#d0202a"></rect></svg>
<svg style="left:539px;top:412.2px" width="14" height="18" viewBox="0 0 14 18"><text transform="translate(7.2 13.2) scale(1.22 1)" font-family="Liberation Sans" font-size="13.6" font-weight="bold" text-anchor="middle" fill="#16365a" stroke="#16365a" stroke-width=".4">A</text><rect x="1" y="14.6" width="12.4" height="2" fill="#d0202a"></rect></svg>
<div class="btn" style="left:582px;top:409px;width:30px;height:26px"></div>
<svg style="left:588.6px;top:412px" width="17" height="18.6" viewBox="0 0 18 20" preserveAspectRatio="none"><circle cx="8.6" cy="7.4" r="6.2" fill="#3a9ae8"></circle><path d="M4 3.4Q6.6 1.4 8.6 3Q10.2 5 8.2 6.6Q6.4 8.4 4.4 7.4Q2.6 5.6 4 3.4Z" fill="#56c040"></path><path d="M10.4 7.4Q13 6.4 14.4 8.6Q14 11.4 11.8 12Q9.8 10.2 10.4 7.4Z" fill="#56c040"></path><path d="M5 10Q6.6 10 7.2 12L6 13.8Q4 12.4 5 10Z" fill="#56c040"></path><rect x="0.8" y="12.2" width="16.4" height="6.6" rx="1.2" fill="#f4f4f4" stroke="#222" stroke-width="1.1"></rect><rect x="3" y="14.2" width="5.2" height="2.6" rx="1.2" fill="none" stroke="#222" stroke-width="1"></rect><rect x="9.8" y="14.2" width="5.2" height="2.6" rx="1.2" fill="none" stroke="#222" stroke-width="1"></rect><path d="M6.6 15.5H11.4" stroke="#222" stroke-width="1.1"></path></svg>
<div class="btn" style="left:632px;top:409px;width:60px;height:26px"><div class="dv" style="left:29px"></div></div>
<svg style="left:640px;top:415px" width="15" height="12" viewBox="0 0 15 12"><circle cx="2" cy="2.6" r="1.5" fill="#16365a"></circle><circle cx="2" cy="9" r="1.5" fill="#16365a"></circle><path d="M6 2.6H14.4M6 9H14.4" stroke="#444" stroke-width="1.1"></path></svg>
<svg style="left:669px;top:413px" width="16" height="16" viewBox="0 0 16 16"><text x="0" y="7" font-family="Liberation Sans" font-size="8" font-weight="bold" fill="#16365a">1</text><text x="0" y="15" font-family="Liberation Sans" font-size="8" font-weight="bold" fill="#16365a">2</text><path d="M6 4.4H14.6M6 11.4H14.6" stroke="#444" stroke-width="1.1"></path></svg>
<div class="btn" style="left:712px;top:409px;width:120px;height:26px"><div class="dv" style="left:29px"></div><div class="dv" style="left:59px"></div><div class="dv" style="left:89px"></div></div>
<div class="a" style="left:712px;top:409px;width:30px;height:26px;background:#ececec;border:1px solid #b4b4b4;border-radius:3px 0 0 3px"></div>
<svg style="left:720px;top:416px" width="14" height="13" viewBox="0 0 14 13"><path d="M0.4 1.5H8M0.4 4.5H12M0.4 7.5H8M0.4 10.5H12" stroke="#444" stroke-width="1"></path></svg>
<svg style="left:750px;top:416px" width="14" height="13" viewBox="0 0 14 13"><path d="M3 1.5H11M0.8 4.5H13.2M3 7.5H11M0.8 10.5H13.2" stroke="#333" stroke-width="1"></path></svg>
<svg style="left:780px;top:416px" width="14" height="13" viewBox="0 0 14 13"><path d="M5.6 1.5H13.4M1.6 4.5H13.4M5.6 7.5H13.4M1.6 10.5H13.4" stroke="#333" stroke-width="1"></path></svg>
<svg style="left:810px;top:416px" width="14" height="13" viewBox="0 0 14 13"><path d="M0.8 1.5H13.2M0.8 4.5H13.2M0.8 7.5H13.2M0.8 10.5H13.2" stroke="#333" stroke-width="1"></path></svg>
<div class="btn" style="left:888px;top:409px;width:61px;height:26px"></div>
<div class="a" style="top: 415px; font-size: 13.4px; line-height: 15px; color: rgb(60, 60, 60); letter-spacing: 0.401px; left: 902px;">Еще</div>
<svg style="left:936.2px;top:422px" width="5.6" height="3" viewBox="0 0 5.6 3"><path d="M0 0H5.6L2.8 3Z" fill="#3c3c3c"></path></svg>
<div class="a" style="left:77px;top:442px;width:875px;height:285px;border:1px solid #000"></div>
<div class="a" style="left:80px;top:445px;width:869px;height:279px;border:1px solid #a8a8a8"></div>
<div class="a" style="top: 453px; font-size: 16.5px; line-height: 20px; color: rgb(34, 34, 34); letter-spacing: 0.099px; left: 89px;">Необходимо согласовать договор на аутсорсинговое обслуживание.</div>
<div class="a" style="left:621px;top:454px;width:1px;height:18px;background:#000"></div>
<!--BOTTOM-->
<div class="a " style="top: 738px; font-size: 13.4px; line-height: 15px; color: rgb(74, 74, 74); transform: scaleX(0.9772); transform-origin: 0px 0px; letter-spacing: -0.15px; left: 79.62px;">Влияние:</div>
<div class="inp" style="left:152px;top:733px;width:225px;height:25px"><div class="dv" style="left:202px"></div></div>
<div class="a " style="top: 738px; font-size: 13.4px; line-height: 15px; color: rgb(42, 42, 42); transform: scaleX(0.9599); transform-origin: 0px 0px; letter-spacing: -0.15px; left: 156.7px;">Среднее</div>
<svg style="left:363px;top:743.5px" width="5.4" height="2.9" viewBox="0 0 5.4 2.9"><path d="M0 0H5.4L2.7 2.9Z" fill="#3c3c3c"></path></svg>
<div class="a " style="top: 738px; font-size: 13.4px; line-height: 15px; color: rgb(74, 74, 74); transform: scaleX(0.9609); transform-origin: 0px 0px; letter-spacing: -0.15px; left: 387.4px;">Срочность:</div>
<div class="inp" style="left:459px;top:733px;width:225px;height:25px"><div class="dv" style="left:202px"></div></div>
<div class="a " style="top: 738px; font-size: 13.4px; line-height: 15px; color: rgb(42, 42, 42); transform: scaleX(0.9692); transform-origin: 0px 0px; letter-spacing: -0.15px; left: 463.3px;">Средняя</div>
<svg style="left:670px;top:743.5px" width="5.4" height="2.9" viewBox="0 0 5.4 2.9"><path d="M0 0H5.4L2.7 2.9Z" fill="#3c3c3c"></path></svg>
<div class="a " style="top: 738px; font-size: 13.4px; line-height: 15px; color: rgb(74, 74, 74); transform: scaleX(0.9296); transform-origin: 0px 0px; letter-spacing: -0.15px; left: 694.07px;">Приоритет:</div>
<div class="a " style="top: 738px; font-size: 13.4px; line-height: 15px; color: rgb(42, 42, 42); transform: scaleX(0.9669); transform-origin: 0px 0px; letter-spacing: -0.15px; left: 764.5px;">Средний</div>
<div class="inp" style="left:80px;top:767px;width:869px;height:25px"></div>
<div class="a " style="top: 772px; font-size: 13.4px; line-height: 15px; color: rgb(198, 198, 198); letter-spacing: -0.298px; left: 83px;">Произвольный комментарий к заданию</div>
<svg style="left:72px;top:814px" width="11" height="13" viewBox="0 0 11 13"><circle cx="5.5" cy="3.6" r="3" fill="#e8b060" stroke="#a87830" stroke-width=".6"></circle><path d="M2.6 2.6Q5.5 -0.4 8.4 2.6Q5.5 1.6 2.6 2.6Z" fill="#7a5a2a"></path><path d="M0.4 12.6Q0.4 7.4 5.5 7.4T10.6 12.6Z" fill="#2e8ac0"></path><path d="M4.4 7.6L5.5 10L6.6 7.6Z" fill="#fff"></path></svg>
<div class="a lnk" style="top: 814px; font-size: 13.4px; line-height: 15px; color: rgb(26, 79, 181); letter-spacing: -0.265px; left: 100.9px;">Изменён: 08.11.2023 15:46:57 Администратор</div>
<svg style="left:656px;top:815px" width="17" height="14" viewBox="0 0 17 14"><rect x="0.6" y="0.6" width="11.8" height="9.8" fill="#f6f8fa" stroke="#8a98a8" stroke-width="1"></rect><path d="M2.6 3.2H10.4M2.6 5.4H10.4M2.6 7.6H8" stroke="#8a98a8" stroke-width=".9"></path><path d="M9 9.6L11.4 12L16 6.6" fill="none" stroke="#2a9a3a" stroke-width="2.2"></path></svg>
<div class="a " style="top: 814px; font-size: 13.4px; line-height: 15px; color: rgb(160, 48, 28); transform: scaleX(0.9788); transform-origin: 0px 0px; letter-spacing: -0.15px; left: 683.82px;">Проведен</div>
<svg style="left:843px;top:812px" width="18" height="17" viewBox="0 0 18 17"><rect x="1" y="12" width="3.2" height="4.6" fill="#e03a2a"></rect><rect x="4.8" y="9" width="3.2" height="7.6" fill="#f0a020"></rect><rect x="8.6" y="5.4" width="3.2" height="11.2" fill="#48b040"></rect><rect x="12.4" y="1" width="3.6" height="15.6" fill="#3a7ad0" stroke="#8a8a8a" stroke-width=".5"></rect></svg>
<div class="a lnk" style="top: 814px; font-size: 13.4px; line-height: 15px; color: rgb(26, 79, 181); transform: scaleX(0.9646); transform-origin: 0px 0px; letter-spacing: -0.15px; left: 865.4px;">Диаграмма Ганта</div>
<div class="a" style="left:69px;top:840px;width:1250px;height:35px;background:#fbebd9"></div>
<div class="a " style="top: 850px; font-size: 13.4px; line-height: 15px; color: rgb(58, 58, 58); transform: scaleX(0.9654); transform-origin: 0px 0px; letter-spacing: -0.15px; left: 74.6px;">Оценка:</div>
<div class="inp" style="left:127px;top:845px;width:1187px;height:25px"><div class="dv" style="left:1164px"></div></div>
<div class="a " style="top: 850px; font-size: 13.4px; line-height: 15px; color: rgb(42, 42, 42); letter-spacing: -0.096px; left: 129.9px;">Без оценки</div>
<svg style="left:1300px;top:855.5px" width="5.4" height="2.9" viewBox="0 0 5.4 2.9"><path d="M0 0H5.4L2.7 2.9Z" fill="#3c3c3c"></path></svg>
<!--RIGHT-->
<div class="a" style="left:979px;top:198px;width:340px;height:26px;background:#f5faf7"></div>
<div class="a " style="top: 204px; font-size: 13.4px; line-height: 15px; color: rgb(34, 34, 34); font-weight: bold; transform: scaleX(0.9744); transform-origin: 0px 0px; letter-spacing: -0.15px; left: 984.8px;">Исполнитель:</div>
<div class="btn" style="left:979px;top:241px;width:30px;height:26px"></div>
<svg style="left:986px;top:251px" width="16" height="7" viewBox="0 0 16 7"><rect x="0.8" y="0.8" width="7" height="5.4" rx="2.2" fill="#fff" stroke="#5c5c5c" stroke-width="1.5"></rect><rect x="8.2" y="0.8" width="7" height="5.4" rx="2.2" fill="#fff" stroke="#5c5c5c" stroke-width="1.5"></rect><rect x="3.6" y="2.4" width="8.8" height="2.2" rx="1" fill="#fff" stroke="#5c5c5c" stroke-width="1"></rect></svg>
<svg style="left:1068px;top:243px" width="16" height="17" viewBox="0 0 16 17"><path d="M9 7.4Q9.4 6.8 10.2 6.8Q14.6 7.6 15 12.6Q15 15.6 12 15.8H9.4Z" fill="#4cb030" stroke="#3a9020" stroke-width=".5"></path><path d="M9.6 7.6L10.6 11.2L11.8 8Z" fill="#fff" opacity=".85"></path><circle cx="10.2" cy="4.3" r="2.8" fill="#f2cc18"></circle><path d="M7.4 5.2Q7 2 9.6 1.2Q11.8 0.8 12.8 2.6Q10.4 2 8.8 3.4Q8.2 4.2 7.4 5.2Z" fill="#7a4a08"></path><path d="M1 8.4L3 6.6L5.8 9L7.6 7.4L8.8 14.4L1.8 13.8L3.6 12Z" fill="#f03c14"></path></svg>
<div class="a " style="top: 245px; font-size: 16.5px; line-height: 19px; color: rgb(51, 51, 51); transform: scaleX(0.9785); transform-origin: 0px 0px; letter-spacing: -0.15px; left: 1088.1px;">Соломахин Руслан</div>
<div class="btn" style="left:1289px;top:241px;width:30px;height:26px"></div>
<div class="a" style="left:1298px;top:250px;font-size:11px;color:#444;letter-spacing:0.6px;line-height:10px">...</div>
<div class="a" style="left:979px;top:284px;width:340px;height:27px;background:#f5faf7"></div>
<div class="a " style="top: 290px; font-size: 13.4px; line-height: 15px; color: rgb(17, 17, 17); font-weight: bold; transform: scaleX(0.9692); transform-origin: 0px 0px; letter-spacing: -0.15px; left: 984.6px;">Даты:</div>
<svg style="left:1258px;top:286px" width="17" height="19" viewBox="0 0 17 19"><rect x="0.6" y="4.4" width="13.8" height="13.8" rx="1.8" fill="#fff" stroke="#9a9a9a" stroke-width="1"></rect><path d="M3.6 10.2L7 14.2L15.4 3.8" fill="none" stroke="#1478d0" stroke-width="2.6"></path></svg>
<div class="a" style="left:1280.5px;top:289px;font-size:13px;line-height:15px;color:#1a6fc0">?</div>
<svg style="left:1298px;top:290.6px" width="17" height="15" viewBox="0 0 17 15"><path d="M2.4 0.8H14.2Q15.8 0.8 15.8 2.4V10.6Q15.8 12.2 14.2 12.2H13.8L15.2 14.4L11 12.2H2.4Q0.8 12.2 0.8 10.6V2.4Q0.8 0.8 2.4 0.8Z" fill="#fdd640" stroke="#d8901c" stroke-width="1"></path><rect x="7.6" y="5.4" width="1.4" height="4.6" fill="#d08a18"></rect><rect x="7.6" y="3" width="1.4" height="1.4" fill="#d08a18"></rect></svg>
<div class="a " style="top: 321px; font-size: 13.4px; line-height: 15px; color: rgb(74, 74, 74); transform: scaleX(0.9668); transform-origin: 0px 0px; letter-spacing: -0.15px; left: 979.7px;">Отреагировать до:</div>
<div class="inp" style="left:979px;top:340px;width:203px;height:25px"><div class="dv" style="left:159px"></div><div class="dv" style="left:180px"></div></div>
<div class="a " style="top: 345px; font-size: 13.4px; line-height: 15px; color: rgb(42, 42, 42); transform: scaleX(0.972); transform-origin: 0px 0px; letter-spacing: -0.15px; left: 983.4px;">08.11.2023 16:00:00</div>
<svg style="left:1147px;top:350.5px" width="5.4" height="2.9" viewBox="0 0 5.4 2.9"><path d="M0 0H5.4L2.7 2.9Z" fill="#3c3c3c"></path></svg>
<svg style="left:1166.5px;top:346px" width="9" height="10" viewBox="0 0 9 10"><rect x="0.5" y="1.5" width="8" height="8" fill="#fff" stroke="#333" stroke-width="1"></rect><rect x="0.5" y="1.5" width="8" height="2.2" fill="#333"></rect><rect x="2" y="0" width="1.2" height="2" fill="#333"></rect><rect x="5.8" y="0" width="1.2" height="2" fill="#333"></rect><path d="M2 5.4H7M2 7.4H7" stroke="#333" stroke-width=".9" stroke-dasharray="1 1"></path></svg>
<div class="a " style="top: 375px; font-size: 13.4px; line-height: 15px; color: rgb(74, 74, 74); letter-spacing: -0.27px; left: 978.7px;">Выполнить до:</div>
<div class="inp" style="left:979px;top:394px;width:203px;height:25px"><div class="dv" style="left:159px"></div><div class="dv" style="left:180px"></div></div>
<div class="a " style="top: 399px; font-size: 13.4px; line-height: 15px; color: rgb(42, 42, 42); transform: scaleX(0.972); transform-origin: 0px 0px; letter-spacing: -0.15px; left: 983.4px;">09.11.2023 12:00:00</div>
<svg style="left:1147px;top:404.5px" width="5.4" height="2.9" viewBox="0 0 5.4 2.9"><path d="M0 0H5.4L2.7 2.9Z" fill="#3c3c3c"></path></svg>
<svg style="left:1166.5px;top:400px" width="9" height="10" viewBox="0 0 9 10"><rect x="0.5" y="1.5" width="8" height="8" fill="#fff" stroke="#333" stroke-width="1"></rect><rect x="0.5" y="1.5" width="8" height="2.2" fill="#333"></rect><rect x="2" y="0" width="1.2" height="2" fill="#333"></rect><rect x="5.8" y="0" width="1.2" height="2" fill="#333"></rect><path d="M2 5.4H7M2 7.4H7" stroke="#333" stroke-width=".9" stroke-dasharray="1 1"></path></svg>
<div class="a" style="left:979px;top:428px;width:340px;height:26px;background:#f5faf7"></div>
<div class="a " style="top: 434px; font-size: 13.4px; line-height: 15px; color: rgb(34, 34, 34); font-weight: bold; letter-spacing: -0.284px; left: 984.8px;">Текущий этап:</div>
<svg style="left:1091px;top:470px" width="18" height="18" viewBox="0 0 18 18"><path d="M10.2 4.6L2.2 12.6Q1 14.2 2.2 15.6T5.2 15.8L13.2 7.8" fill="#dff0fc" stroke="#3a9ae0" stroke-width="1.2"></path><path d="M10.4 4.4Q10 2.2 11.8 1.2T15.2 1.4L12.8 3.6L14.2 5.2L16.6 3Q17.4 5.2 15.8 6.8T12.6 7.4" fill="#f4f4f4" stroke="#555" stroke-width="1"></path></svg>
<div class="a " style="top: 470px; font-size: 16.5px; line-height: 19px; color: rgb(17, 17, 17); letter-spacing: -0.255px; left: 1123.5px;">Обработка</div>
<div class="a" style="left:979px;top:504px;width:340px;height:26px;background:#f5faf7"></div>
<div class="a " style="top: 510px; font-size: 13.4px; line-height: 15px; color: rgb(34, 34, 34); font-weight: bold; letter-spacing: 0.04px; left: 984.8px;">Перевести задание на этап:</div>
<div class="inp" style="left:979px;top:539px;width:133px;height:25px"><div class="dv" style="left:89px"></div><div class="dv" style="left:110px"></div></div>
<div class="a " style="top: 544px; font-size: 13.4px; line-height: 15px; color: rgb(42, 42, 42); letter-spacing: 0px; left: 1060px;">0</div>
<svg style="left:1077px;top:549.5px" width="5.4" height="2.9" viewBox="0 0 5.4 2.9"><path d="M0 0H5.4L2.7 2.9Z" fill="#3c3c3c"></path></svg>
<svg style="left:1097.5px;top:548px" width="6" height="6" viewBox="0 0 6 6"><path d="M0.5 0.5L5.5 5.5M5.5 0.5L0.5 5.5" stroke="#555" stroke-width="1.1"></path></svg>
<div class="a " style="top: 544px; font-size: 13.4px; line-height: 15px; color: rgb(74, 74, 74); transform: scaleX(0.9649); transform-origin: 0px 0px; letter-spacing: -0.15px; left: 1118px;">% выполнения</div>
<div class="btn" style="left:999px;top:573px;width:300px;height:40px"></div>
<svg style="left:1006px;top:585px" width="16" height="17" viewBox="0 0 16 17"><rect x="1.2" y="8.6" width="13.6" height="7.2" rx="2.6" fill="#7ed02c" stroke="#3a9a20" stroke-width="1"></rect><circle cx="8" cy="5.2" r="4.3" fill="#fdd9a0" stroke="#d8902c" stroke-width="1"></circle></svg>
<div class="a " style="top: 586px; font-size: 13.4px; line-height: 15px; color: rgb(168, 34, 42); transform: scaleX(0.9743); transform-origin: 0px 0px; letter-spacing: -0.15px; left: 1075.63px;">Назначение ответственных</div>
<div class="a" style="left:979px;top:641px;width:340px;height:30px;background:#f5faf7"></div>
<div class="a " style="top: 647px; font-size: 13.4px; line-height: 15px; color: rgb(34, 34, 34); font-weight: bold; letter-spacing: -0.124px; left: 984.8px;">Трудозатраты:</div>
<svg style="left:1210px;top:648px" width="17" height="16" viewBox="0 0 17 16"><circle cx="3.4" cy="2.6" r="1.9" fill="#bcbcbc" stroke="#a8a8a8" stroke-width=".6"></circle><circle cx="9" cy="9" r="6.2" fill="#c4c8cc" stroke="#a8acb0" stroke-width="1"></circle><path d="M9 9L5.4 5.8M9 9L12.4 6.4" stroke="#eceff2" stroke-width="1.2"></path><path d="M11 10V15.6L16 12.8Z" fill="#b0b8c0" stroke="#98a0a8" stroke-width=".5"></path></svg>
<svg style="left:1251px;top:648px" width="17" height="16" viewBox="0 0 17 16"><circle cx="3.4" cy="2.6" r="1.9" fill="#bcbcbc" stroke="#a8a8a8" stroke-width=".6"></circle><circle cx="9" cy="9" r="6.2" fill="#c4c8cc" stroke="#a8acb0" stroke-width="1"></circle><path d="M9 9L5.4 5.8M9 9L12.4 6.4" stroke="#eceff2" stroke-width="1.2"></path><rect x="10.4" y="9.8" width="5.8" height="5.8" fill="#c8d0d8" stroke="#98a0a8" stroke-width=".8"></rect></svg>
<svg style="left:1291px;top:649px" width="15" height="15" viewBox="0 0 15 15"><path d="M10.4 1L14 4.6L5 13.6L1.4 10Z" fill="#b0c4a8" stroke="#a0b098" stroke-width=".5"></path><path d="M1.4 10L5 13.6L0.6 14.4Z" fill="#c8b8a4"></path><path d="M10.4 1L14 4.6L12.4 6.2L8.8 2.6Z" fill="#9aa2b6"></path></svg>
<div class="a" style="left:979px;top:680px;width:340px;height:26px;background:#f5faf7"></div>
<div class="a " style="top: 686px; font-size: 13.4px; line-height: 15px; color: rgb(34, 34, 34); font-weight: bold; transform: scaleX(0.9512); transform-origin: 0px 0px; letter-spacing: -0.15px; left: 984.8px;">Теги:</div>
<div class="inp" style="left:979px;top:715px;width:340px;height:25px"><div class="dv" style="left:317px"></div></div>
<div class="a " style="top: 720px; font-size: 13.4px; line-height: 15px; color: rgb(198, 198, 198); transform: scaleX(0.9765); transform-origin: 0px 0px; letter-spacing: -0.15px; left: 982.02px;">Выберите или введите тег</div>
<svg style="left:1305px;top:725.5px" width="5.4" height="2.9" viewBox="0 0 5.4 2.9"><path d="M0 0H5.4L2.7 2.9Z" fill="#3c3c3c"></path></svg>

</body></html>
